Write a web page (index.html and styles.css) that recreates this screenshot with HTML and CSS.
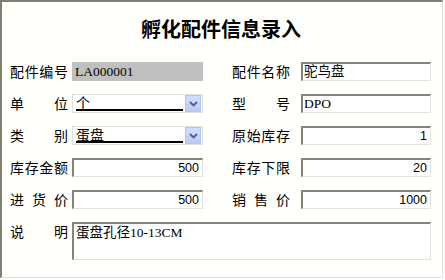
FILE: index.html
```html
<!DOCTYPE html>
<html lang="zh-CN">
<head>
    <meta charset="UTF-8">
    <title>孵化配件信息录入</title>
    <link rel="stylesheet" href="styles.css">
</head>
<body>
<div class="panel">
    <h1 class="title">孵化配件信息录入</h1>

    <!-- form grid -->
    <div class="form">
        <div class="label"><span>配</span><span>件</span><span>编</span><span>号</span></div>
        <div class="field gray">LA000001</div>
        <div class="label right"><span>配</span><span>件</span><span>名</span><span>称</span></div>
        <div class="field">驼鸟盘</div>

        <div class="label"><span>单</span><span>位</span></div>
        <div class="combo">
            <span class="combo-text">个</span>
            <span class="combo-btn"><svg width="9" height="6" viewBox="0 0 9 6"><path d="M1 1 L4.5 4.5 L8 1" fill="none" stroke="#4a5f8a" stroke-width="1.8"/></svg></span>
        </div>
        <div class="label right"><span>型</span><span>号</span></div>
        <div class="field">DPO</div>

        <div class="label"><span>类</span><span>别</span></div>
        <div class="combo">
            <span class="combo-text">蛋盘</span>
            <span class="combo-btn"><svg width="9" height="6" viewBox="0 0 9 6"><path d="M1 1 L4.5 4.5 L8 1" fill="none" stroke="#4a5f8a" stroke-width="1.8"/></svg></span>
        </div>
        <div class="label right"><span>原</span><span>始</span><span>库</span><span>存</span></div>
        <div class="field num">1</div>

        <div class="label"><span>库</span><span>存</span><span>金</span><span>额</span></div>
        <div class="field num">500</div>
        <div class="label right"><span>库</span><span>存</span><span>下</span><span>限</span></div>
        <div class="field num">20</div>

        <div class="label"><span>进</span><span>货</span><span>价</span></div>
        <div class="field num">500</div>
        <div class="label right"><span>销</span><span>售</span><span>价</span></div>
        <div class="field num">1000</div>

        <div class="label top"><span>说</span><span>明</span></div>
        <div class="field memo">蛋盘孔径10-13CM</div>
    </div>
</div>
</body>
</html>
```

FILE: styles.css
```css
body {
  margin: 0;
  background-color: #ffffff;
  font-family: "Noto Sans CJK SC", sans-serif;
  color: #000;
}
.panel {
  width: 432px;
  height: 275px;
  padding: 0 0 0 8px;
  border-top: 2px solid #7f7f72;
  border-left: 2px solid #7f7f72;
  border-right: 1px solid #e2e2dc;
  border-bottom: 1px solid #e2e2dc;
  background-color: #fffffb;
}
.title {
  margin: 0;
  padding-top: 15px;
  padding-right: 10px;
  font-size: 20px;
  line-height: 24px;
  font-weight: bold;
  text-align: center;
}
.form {
  margin-top: 21px;
  display: grid;
  grid-template-columns: 62px 131px 98px 130px;
  grid-auto-rows: 19px;
  row-gap: 13px;
}
.label {
  width: 58px;
  display: flex;
  justify-content: space-between;
  align-items: center;
  font-size: 14px;
  line-height: 19px;
}
.label.right {
  margin-left: 29px;
}
.label.top {
  align-self: start;
  height: 19px;
}
.field {
  box-sizing: border-box;
  height: 19px;
  padding: 0 3px 0 1px;
  border-style: solid;
  border-width: 2px 1px 1px 2px;
  border-color: #858578 #e4e4de #e4e4de #858578;
  background-color: #fff;
  font-family: "Liberation Serif", "Noto Sans CJK SC", serif;
  font-size: 13.5px;
  line-height: 16px;
  white-space: nowrap;
}
.field.gray {
  border-color: #c0c0c0;
  background-color: #c0c0c0;
}
.field.num {
  text-align: right;
  font-family: "Liberation Sans", sans-serif;
  font-size: 12.5px;
}
.field.memo {
  grid-column: 2 / 5;
  height: 38px;
  padding-left: 2px;
  padding-top: 1px;
}
.combo {
  box-sizing: border-box;
  height: 19px;
  display: flex;
  align-items: stretch;
  border: 1px solid #e0e0da;
  background-color: #fff;
}
.combo-text {
  flex: 1;
  margin: 0 2px 1px 3px;
  border-bottom: 2px solid #000;
  font-size: 14px;
  line-height: 14px;
}
.combo-btn {
  width: 16px;
  margin: 0 1px 0 0;
  display: flex;
  align-items: center;
  justify-content: center;
  background: linear-gradient(#d3defd, #b9cbf6);
  border: 1px solid #b4c6ee;
  box-sizing: border-box;
}
```
